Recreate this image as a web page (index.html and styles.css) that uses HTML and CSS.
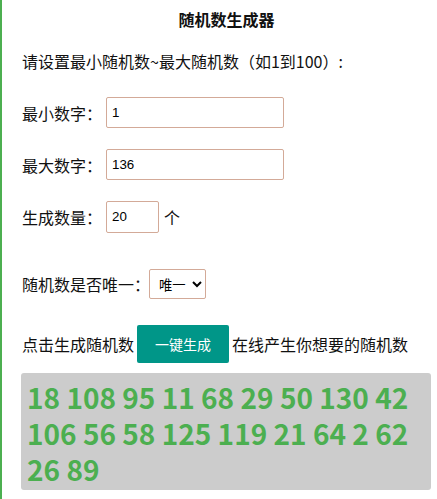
FILE: index.html
```html
<!DOCTYPE html>
<html lang="zh-CN">
<head>
<meta charset="utf-8">
<title>随机数生成器</title>
<link rel="stylesheet" href="styles.css">
</head>
<body>
<div class="page">
  <h3 class="title">随机数生成器</h3>
  <p class="intro">请设置最小随机数~最大随机数（如1到100）:</p>
  <div class="row row-first">
    <label class="label">最小数字：</label><input class="num wide" type="text" value="1">
  </div>
  <div class="row">
    <label class="label">最大数字：</label><input class="num wide" type="text" value="136">
  </div>
  <div class="row">
    <label class="label">生成数量：</label><input class="num short" type="text" value="20"><span class="unit">个</span>
  </div>
  <div class="row row-select">
    <label class="label">随机数是否唯一：</label><select class="pick"><option>唯一</option><option>不唯一</option></select>
  </div>
  <div class="row row-button">
    <span>点击生成随机数</span><button class="go" type="button">一键生成</button><span>在线产生你想要的随机数</span>
  </div>
  <div class="result">18 108 95 11 68 29 50 130 42 106 56 58 125 119 21 64 2 62 26 89</div>
</div>
</body>
</html>
```

FILE: styles.css
```css
html, body {
  margin: 0;
  padding: 0;
  background: #ffffff;
}
body {
  border-left: 2px solid #4caf50;
  min-height: 499px;
  box-sizing: border-box;
  font-family: "Noto Sans CJK SC", "Noto Sans", sans-serif;
  font-size: 16px;
  color: #111;
}
.page {
  padding: 8px 6px 0 20px;
  display: flex;
  flex-direction: column;
}
.title {
  margin: 0;
  font-size: 16px;
  font-weight: bold;
  line-height: 22px;
  text-align: center;
}
.intro {
  margin: 19px 0 0 0;
  line-height: 24px;
}
.row {
  display: flex;
  align-items: center;
  gap: 4px;
  margin-top: 21px;
  height: 31px;
}
.row-first {
  margin-top: 24px;
}
.row-select {
  margin-top: 37px;
  height: 30px;
  gap: 0;
}
.row-button {
  margin-top: 26px;
  height: 38px;
  gap: 3px;
}
.num {
  box-sizing: border-box;
  height: 31px;
  border: 1px solid #d3aa98;
  border-radius: 2px;
  padding: 0 5px;
  font-family: "Liberation Sans", Arial, sans-serif;
  font-size: 13.33px;
  color: #000;
  background: #fff;
  outline: none;
}
.wide {
  width: 178px;
}
.short {
  width: 53px;
  height: 32px;
}
.unit {
  margin-left: 1px;
}
.pick {
  box-sizing: border-box;
  width: 57px;
  height: 30px;
  margin-left: -1px;
  border: 1px solid #d3aa98;
  border-radius: 2px;
  background: #fff;
  font-family: "Noto Sans CJK SC", sans-serif;
  font-size: 13.33px;
  color: #000;
  padding: 0 2px 0 5px;
}
.go {
  box-sizing: border-box;
  height: 38px;
  width: 92px;
  border: none;
  border-radius: 2px;
  background: #009688;
  color: #fff;
  font-family: "Noto Sans CJK SC", sans-serif;
  font-size: 14px;
  padding: 0;
}
.result {
  margin: 10px 0 0 -1px;
  width: 410px;
  box-sizing: border-box;
  height: 117px;
  background: #cccccc;
  border-radius: 3px;
  padding: 6px 6px 0 6px;
  color: #4caf50;
  font-weight: bold;
  font-size: 28px;
  line-height: 36px;
}
```
